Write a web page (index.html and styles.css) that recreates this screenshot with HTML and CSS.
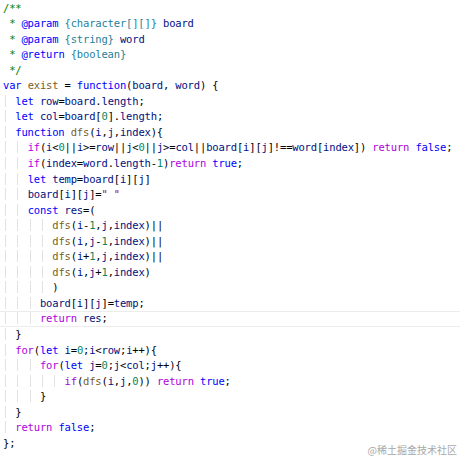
FILE: index.html
```html
<!DOCTYPE html>
<html>
<head>
<meta charset="utf-8">
<link rel="stylesheet" href="styles.css">
</head>
<body>
<div class="editor">
<div class="ln"><span class="cm">/**</span></div>
<div class="ln"><span class="cm"> * </span><span class="tag">@param</span><span class="cm"> </span><span class="t">{character[][]}</span><span class="cm"> </span><span class="v">board</span></div>
<div class="ln"><span class="cm"> * </span><span class="tag">@param</span><span class="cm"> </span><span class="t">{string}</span><span class="cm"> </span><span class="v">word</span></div>
<div class="ln"><span class="cm"> * </span><span class="tag">@return</span><span class="cm"> </span><span class="t">{boolean}</span></div>
<div class="ln"><span class="cm"> */</span></div>
<div class="ln"><span class="k">var</span> <span class="f">exist</span> = <span class="k">function</span>(<span class="v">board</span>, <span class="v">word</span>) {</div>
<div class="ln"><span class="g">  </span><span class="k">let</span> <span class="v">row</span>=<span class="v">board</span>.<span class="v">length</span>;</div>
<div class="ln"><span class="g">  </span><span class="k">let</span> <span class="v">col</span>=<span class="v">board</span>[<span class="n">0</span>].<span class="v">length</span>;</div>
<div class="ln"><span class="g">  </span><span class="k">function</span> <span class="f">dfs</span>(<span class="v">i</span>,<span class="v">j</span>,<span class="v">index</span>){</div>
<div class="ln"><span class="g">  </span><span class="g">  </span><span class="c">if</span>(<span class="v">i</span>&lt;<span class="n">0</span>||<span class="v">i</span>&gt;=<span class="v">row</span>||<span class="v">j</span>&lt;<span class="n">0</span>||<span class="v">j</span>&gt;=<span class="v">col</span>||<span class="v">board</span>[<span class="v">i</span>][<span class="v">j</span>]!==<span class="v">word</span>[<span class="v">index</span>]) <span class="c">return</span> <span class="k">false</span>;</div>
<div class="ln"><span class="g">  </span><span class="g">  </span><span class="c">if</span>(<span class="v">index</span>=<span class="v">word</span>.<span class="v">length</span>-<span class="n">1</span>)<span class="c">return</span> <span class="k">true</span>;</div>
<div class="ln"><span class="g">  </span><span class="g">  </span><span class="k">let</span> <span class="v">temp</span>=<span class="v">board</span>[<span class="v">i</span>][<span class="v">j</span>]</div>
<div class="ln"><span class="g">  </span><span class="g">  </span><span class="v">board</span>[<span class="v">i</span>][<span class="v">j</span>]=<span class="s">" "</span></div>
<div class="ln"><span class="g">  </span><span class="g">  </span><span class="k">const</span> <span class="v">res</span>=(</div>
<div class="ln"><span class="g">  </span><span class="g">  </span><span class="g">  </span><span class="g">  </span><span class="f">dfs</span>(<span class="v">i</span>-<span class="n">1</span>,<span class="v">j</span>,<span class="v">index</span>)||</div>
<div class="ln"><span class="g">  </span><span class="g">  </span><span class="g">  </span><span class="g">  </span><span class="f">dfs</span>(<span class="v">i</span>,<span class="v">j</span>-<span class="n">1</span>,<span class="v">index</span>)||</div>
<div class="ln"><span class="g">  </span><span class="g">  </span><span class="g">  </span><span class="g">  </span><span class="f">dfs</span>(<span class="v">i</span>+<span class="n">1</span>,<span class="v">j</span>,<span class="v">index</span>)||</div>
<div class="ln"><span class="g">  </span><span class="g">  </span><span class="g">  </span><span class="g">  </span><span class="f">dfs</span>(<span class="v">i</span>,<span class="v">j</span>+<span class="n">1</span>,<span class="v">index</span>)</div>
<div class="ln"><span class="g">  </span><span class="g">  </span><span class="g">  </span><span class="g">  </span>)</div>
<div class="ln"><span class="g">  </span><span class="g">  </span><span class="g">  </span><span class="v">board</span>[<span class="v">i</span>][<span class="v">j</span>]=<span class="v">temp</span>;</div>
<div class="ln cur"><span class="g">  </span><span class="g">  </span><span class="g">  </span><span class="c">return</span> <span class="v">res</span>;</div>
<div class="ln"><span class="g">  </span>}</div>
<div class="ln"><span class="g">  </span><span class="c">for</span>(<span class="k">let</span> <span class="v">i</span>=<span class="n">0</span>;<span class="v">i</span>&lt;<span class="v">row</span>;<span class="v">i</span>++){</div>
<div class="ln"><span class="g">  </span><span class="g">  </span><span class="g">  </span><span class="c">for</span>(<span class="k">let</span> <span class="v">j</span>=<span class="n">0</span>;<span class="v">j</span>&lt;<span class="v">col</span>;<span class="v">j</span>++){</div>
<div class="ln"><span class="g">  </span><span class="g">  </span><span class="g">  </span><span class="g">  </span><span class="g">  </span><span class="c">if</span>(<span class="f">dfs</span>(<span class="v">i</span>,<span class="v">j</span>,<span class="n">0</span>)) <span class="c">return</span> <span class="k">true</span>;</div>
<div class="ln"><span class="g">  </span><span class="g">  </span><span class="g">  </span>}</div>
<div class="ln"><span class="g">  </span>}</div>
<div class="ln"><span class="g">  </span><span class="c">return</span> <span class="k">false</span>;</div>
<div class="ln">};</div>
</div>
<div class="watermark">@稀土掘金技术社区</div>
</body>
</html>
```
FILE: styles.css
```css
html, body {
  margin: 0;
  padding: 0;
  background: #ffffff;
}

body {
  position: relative;
  width: 460px;
  height: 460px;
  overflow: hidden;
}

.editor {
  padding-top: 0.5px;
  font-family: "DejaVu Sans Mono", "Liberation Mono", monospace;
  font-size: 10.5px;
  letter-spacing: -0.17px;
  color: #000000;
}

.ln {
  height: 15.55px;
  line-height: 15.55px;
  padding-left: 3px;
  white-space: pre;
}

.cur {
  box-shadow: inset 0 1px #ececec, inset 0 -1px #ececec;
}

.g {
  background-image: linear-gradient(#e2e2e2, #e2e2e2);
  background-repeat: no-repeat;
  background-size: 1px 100%;
  background-position: 2px 0;
}

.cm { color: #008000; }
.tag { color: #0000ff; }
.t { color: #267f99; }
.k { color: #0000ff; }
.c { color: #af00db; }
.f { color: #795e26; }
.v { color: #001080; }
.n { color: #098658; }
.s { color: #a31515; }

.watermark {
  position: absolute;
  right: 3px;
  top: 443px;
  font-family: "Noto Sans CJK SC", "Noto Sans", sans-serif;
  font-size: 10px;
  line-height: 14px;
  color: #a8a8a8;
  text-shadow: 0 0 2px #ffffff;
}
```
